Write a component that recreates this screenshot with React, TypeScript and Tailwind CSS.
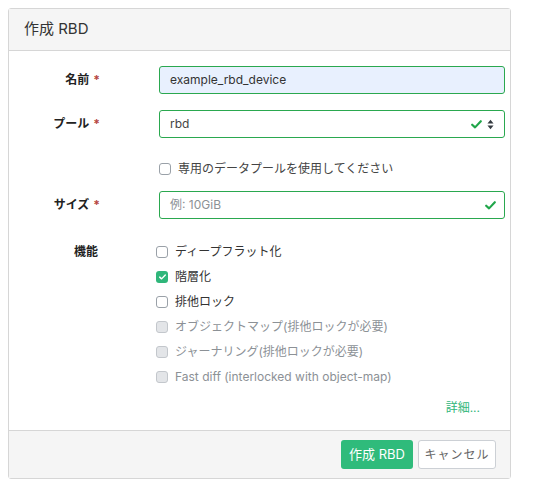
import { useState } from 'react';

const FONT = "font-['Inter','Noto_Sans_CJK_JP',sans-serif]";

function Check({ className }: { className?: string }) {
  return (
    <svg viewBox="0 0 12 10" className={className} fill="none">
      <path d="M1.2 5.2 L4.4 8.2 L10.8 1.4" stroke="currentColor" strokeWidth="2.4" strokeLinecap="round" strokeLinejoin="round" />
    </svg>
  );
}

function SortArrows() {
  return (
    <svg viewBox="0 0 8 12" className="w-[7px] h-[11px] text-[#343a40]">
      <path d="M4 0.5 L7.5 4.8 H0.5 Z" fill="currentColor" />
      <path d="M4 11.5 L7.5 7.2 H0.5 Z" fill="currentColor" />
    </svg>
  );
}

function Box({ checked, disabled }: { checked?: boolean; disabled?: boolean }) {
  if (checked) {
    return (
      <span className="flex items-center justify-center w-[12px] h-[12px] rounded-[3px] bg-[#2fb67a] shrink-0">
        <Check className="w-[7px] h-[6px] text-white" />
      </span>
    );
  }
  return (
    <span
      className={`block w-[12px] h-[12px] rounded-[3px] border shrink-0 ${
        disabled ? 'bg-[#e3e5e8] border-[#c3c7cc]' : 'bg-white border-[#9aa1a8]'
      }`}
    />
  );
}

function Label({ text, required }: { text: string; required?: boolean }) {
  return (
    <div className="w-[150px] shrink-0 pr-[59px] text-right font-bold text-[12px] text-[#222]">
      {text}
      {required && <span className="ml-[4px] text-[#b5453e]">*</span>}
    </div>
  );
}

const FEATURES = [
  { label: 'ディープフラット化' },
  { label: '階層化', checked: true },
  { label: '排他ロック' },
  { label: 'オブジェクトマップ(排他ロックが必要)', disabled: true },
  { label: 'ジャーナリング(排他ロックが必要)', disabled: true },
  { label: 'Fast diff (interlocked with object-map)', disabled: true },
];

export default function App() {
  const [name] = useState('example_rbd_device');

  return (
    <div className={`${FONT} w-[533px] h-[492px] bg-white pt-[8px] pl-[8px]`}>
      <div className="w-[503px] h-[471px] border border-[#d6d6d6] rounded-[3px] flex flex-col">
        {/* Header */}
        <div className="h-[42px] shrink-0 bg-[#f5f5f5] border-b border-[#d6d6d6] flex items-center pl-[15px] text-[15px] text-[#333]">
          作成 RBD
        </div>

        {/* Body */}
        <div className="flex-1 pt-[15px] pr-[5px] flex flex-col text-[12px]">
          <div className="flex items-center h-[28px]">
            <Label text="名前" required />
            <div className="flex-1 h-[28px] rounded-[3px] border border-[#2aa84f] bg-[#e8f0fe] flex items-center px-[10px] text-[#333]">
              {name}
            </div>
          </div>

          <div className="flex items-center h-[28px] mt-[16px]">
            <Label text="プール" required />
            <div className="flex-1 h-[28px] rounded-[3px] border border-[#2aa84f] bg-white flex items-center px-[10px] text-[#444]">
              <span className="flex-1">rbd</span>
              <Check className="w-[11px] h-[9px] text-[#20a64a] mr-[5px]" />
              <SortArrows />
            </div>
          </div>

          <div className="flex items-center h-[14px] mt-[24px]">
            <div className="w-[150px] shrink-0" />
            <div className="flex items-center gap-[7px] text-[#444]">
              <Box />
              専用のデータプールを使用してください
            </div>
          </div>

          <div className="flex items-center h-[28px] mt-[15px]">
            <Label text="サイズ" required />
            <div className="flex-1 h-[28px] rounded-[3px] border border-[#2aa84f] bg-white flex items-center px-[10px] text-[#8c9196]">
              <span className="flex-1">例: 10GiB</span>
              <Check className="w-[11px] h-[9px] text-[#20a64a] mr-[-2px]" />
            </div>
          </div>

          <div className="flex items-start mt-[26px]">
            <div className="w-[150px] shrink-0 pr-[59px] text-right font-bold text-[12px] text-[#222] leading-[14px]">
              <span className="mr-[2px]">機能</span>
            </div>
            <div className="flex flex-col gap-[11px] ml-[-3px]">
              {FEATURES.map((f) => (
                <div
                  key={f.label}
                  className={`flex items-center gap-[7px] h-[14px] ${f.disabled ? 'text-[#8c9196]' : 'text-[#333]'}`}
                >
                  <Box checked={f.checked} disabled={f.disabled} />
                  {f.label}
                </div>
              ))}
            </div>
          </div>

          <div className="flex justify-end mt-[15px] pr-[25px] text-[#2fb67a] text-[12px]">詳細...</div>
        </div>

        {/* Footer */}
        <div className="h-[48px] shrink-0 bg-[#f5f5f5] border-t border-[#d6d6d6] flex items-center justify-end gap-[5px] pr-[14px]">
          <button className="h-[29px] w-[72px] rounded-[3px] bg-[#2fbb7b] text-white text-[13px]">作成 RBD</button>
          <button className="h-[29px] w-[78px] rounded-[3px] bg-white border border-[#ccd0d5] text-[#666] text-[12px] tracking-[1px]">
            キャンセル
          </button>
        </div>
      </div>
    </div>
  );
}
